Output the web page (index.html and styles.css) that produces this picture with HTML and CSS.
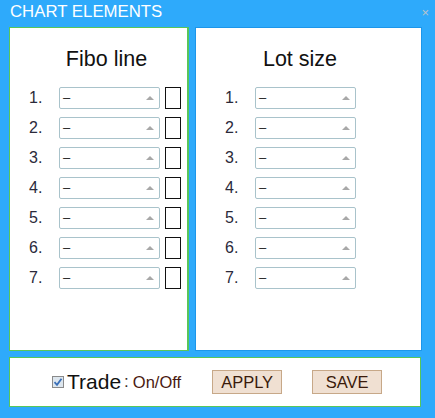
FILE: index.html
```html
<!DOCTYPE html>
<html>
<head>
<meta charset="utf-8">
<link rel="stylesheet" href="styles.css">
</head>
<body>
<div class="window">
  <div class="titlebar">
    <span class="title">CHART ELEMENTS</span>
    <span class="close">×</span>
  </div>
  <div class="panels">
    <div class="panel panel-left">
      <h2 class="heading">Fibo line</h2>
      <div class="rows">
        <div class="row"><span class="num">1.</span><span class="sel">–<i class="arr"></i></span><span class="box"></span></div>
        <div class="row"><span class="num">2.</span><span class="sel">–<i class="arr"></i></span><span class="box"></span></div>
        <div class="row"><span class="num">3.</span><span class="sel">–<i class="arr"></i></span><span class="box"></span></div>
        <div class="row"><span class="num">4.</span><span class="sel">–<i class="arr"></i></span><span class="box"></span></div>
        <div class="row"><span class="num">5.</span><span class="sel">–<i class="arr"></i></span><span class="box"></span></div>
        <div class="row"><span class="num">6.</span><span class="sel">–<i class="arr"></i></span><span class="box"></span></div>
        <div class="row"><span class="num">7.</span><span class="sel">–<i class="arr"></i></span><span class="box"></span></div>
      </div>
    </div>
    <div class="panel panel-right">
      <h2 class="heading">Lot size</h2>
      <div class="rows">
        <div class="row"><span class="num">1.</span><span class="sel">–<i class="arr"></i></span></div>
        <div class="row"><span class="num">2.</span><span class="sel">–<i class="arr"></i></span></div>
        <div class="row"><span class="num">3.</span><span class="sel">–<i class="arr"></i></span></div>
        <div class="row"><span class="num">4.</span><span class="sel">–<i class="arr"></i></span></div>
        <div class="row"><span class="num">5.</span><span class="sel">–<i class="arr"></i></span></div>
        <div class="row"><span class="num">6.</span><span class="sel">–<i class="arr"></i></span></div>
        <div class="row"><span class="num">7.</span><span class="sel">–<i class="arr"></i></span></div>
      </div>
    </div>
  </div>
  <div class="footer">
    <span class="check"><svg width="10" height="10" viewBox="0 0 10 10"><path d="M1.5 5.2 L4 7.8 L8.5 1.8" fill="none" stroke="#3a6fb8" stroke-width="1.8"/></svg></span>
    <span class="trade">Trade</span>
    <span class="colon">:</span>
    <span class="onoff">On/Off</span>
    <span class="btn btn-apply">APPLY</span>
    <span class="btn btn-save">SAVE</span>
  </div>
</div>
</body>
</html>
```
FILE: styles.css
```css
html, body {
  margin: 0;
  padding: 0;
}
body {
  background: #2eaafb;
  font-family: "Liberation Sans", Arial, sans-serif;
  width: 435px;
  height: 418px;
  overflow: hidden;
}
.window {
  display: flex;
  flex-direction: column;
}
.titlebar {
  height: 27px;
  display: flex;
  justify-content: space-between;
  align-items: flex-start;
}
.title {
  color: #ffffff;
  font-size: 16.8px;
  line-height: 16px;
  padding: 4px 0 0 10px;
}
.close {
  color: #b8c4cc;
  font-size: 13px;
  line-height: 13px;
  padding: 6px 6px 0 0;
}
.panels {
  display: flex;
  gap: 6px;
  padding-left: 9px;
  height: 324px;
}
.panel {
  background: #ffffff;
  box-sizing: border-box;
  height: 324px;
}
.panel-left {
  width: 180px;
  border: 1px solid #58c65a;
  border-right: 2px solid #58c65a;
}
.panel-right {
  width: 227px;
  border: 1px solid #1c96ea;
}
.heading {
  margin: 0;
  font-weight: normal;
  font-size: 21.5px;
  line-height: 26px;
  color: #111111;
  text-align: center;
  padding-top: 18px;
}
.panel-left .heading {
  padding-left: 16px;
}
.panel-right .heading {
  padding-right: 17px;
}
.rows {
  display: flex;
  flex-direction: column;
  padding-top: 11px;
}
.row {
  height: 30px;
  display: flex;
  align-items: center;
}
.panel-left .row {
  padding-left: 19px;
}
.panel-right .row {
  padding-left: 29px;
}
.num {
  width: 30px;
  font-size: 16px;
  color: #2a2a3a;
}
.sel {
  position: relative;
  box-sizing: border-box;
  width: 101px;
  height: 22px;
  border: 1px solid #a9c3cb;
  border-radius: 2px;
  font-size: 13px;
  line-height: 20px;
  padding-left: 3px;
  color: #222222;
}
.arr {
  position: absolute;
  right: 5px;
  top: 8px;
  width: 0;
  height: 0;
  border-left: 4px solid transparent;
  border-right: 4px solid transparent;
  border-bottom: 4px solid #a8a8a8;
}
.box {
  box-sizing: border-box;
  width: 16px;
  height: 22px;
  margin-left: 5px;
  border: 1.5px solid #111111;
}
.footer {
  margin: 6px 0 0 9px;
  width: 412px;
  height: 50px;
  box-sizing: border-box;
  background: #ffffff;
  border: 1px solid #58c65a;
  display: flex;
  align-items: center;
  padding-left: 42px;
}
.check {
  box-sizing: border-box;
  width: 12px;
  height: 12px;
  border: 1px solid #8a8a8a;
  background: #dde6ee;
  display: flex;
  align-items: center;
  justify-content: center;
  margin-right: 3px;
}
.trade {
  font-size: 21px;
  color: #111111;
}
.colon {
  font-size: 17px;
  color: #3a2a2a;
  margin: 0 4px 0 3px;
}
.onoff {
  font-size: 16.5px;
  color: #4a1a10;
}
.btn {
  box-sizing: border-box;
  height: 24px;
  background: #f0e0d2;
  border: 1px solid #c7a888;
  font-size: 16.5px;
  line-height: 22px;
  color: #3a1a0a;
  text-align: center;
}
.btn-apply {
  width: 70px;
  margin-left: 31px;
}
.btn-save {
  width: 70px;
  margin-left: 30px;
}
```
